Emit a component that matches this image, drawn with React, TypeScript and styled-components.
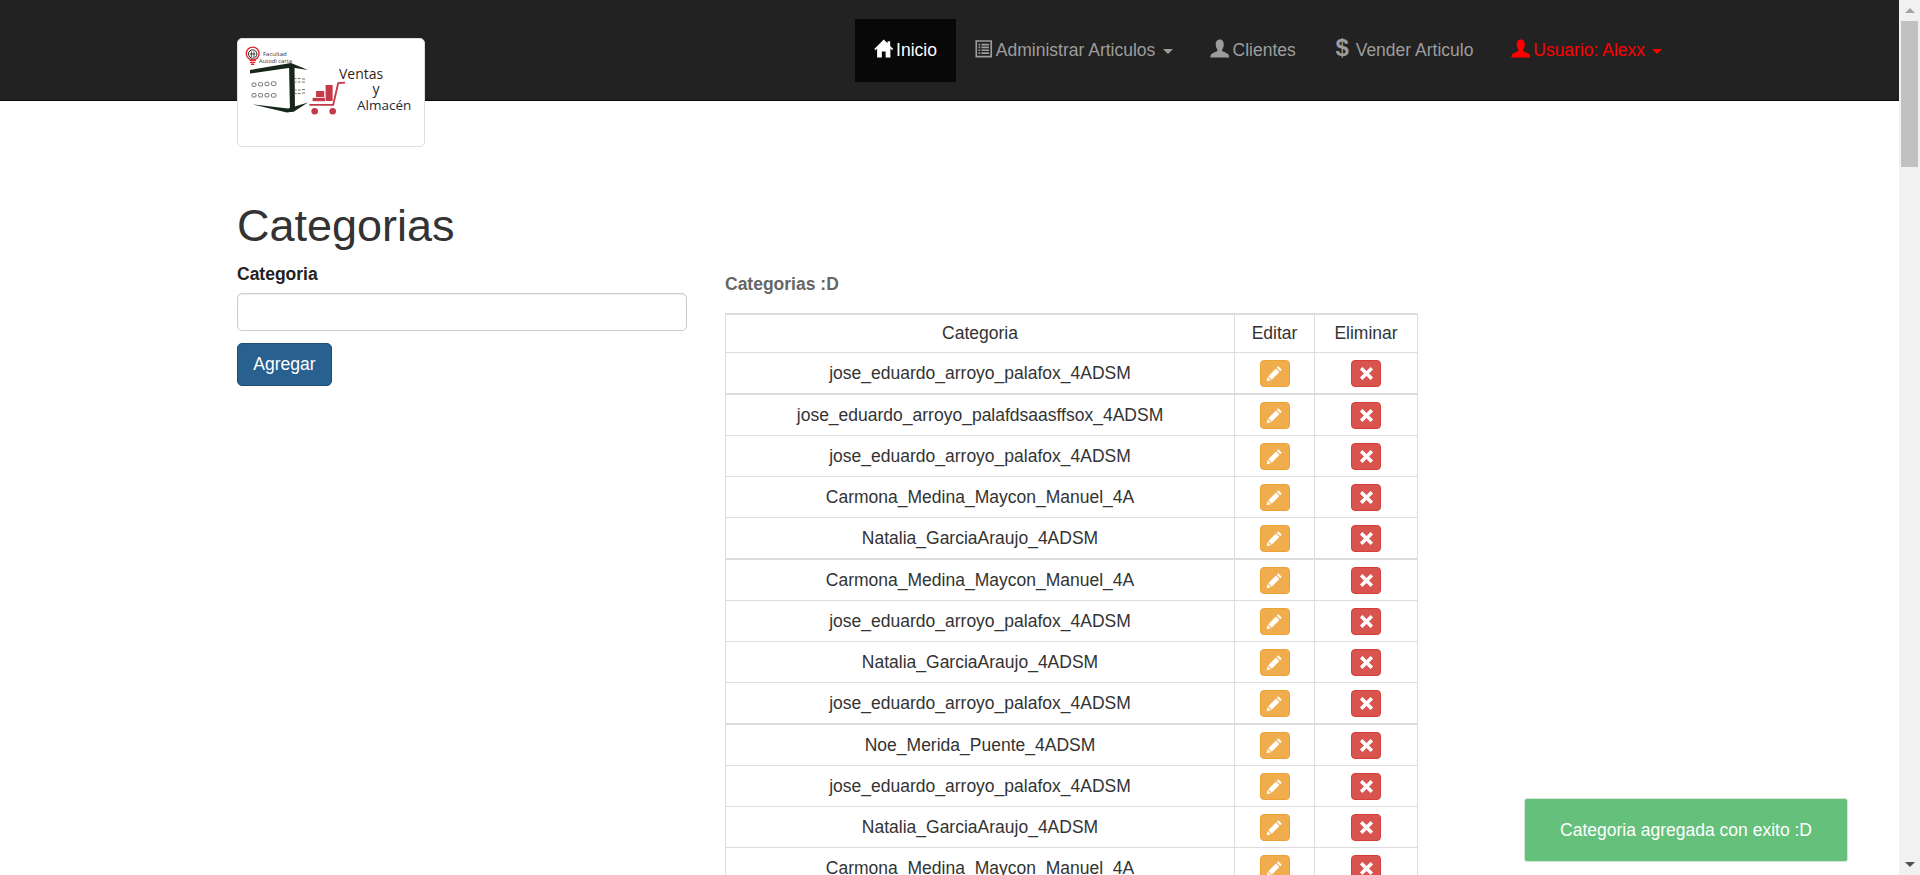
import { createGlobalStyle, styled } from 'styled-components';

const GlobalStyle = createGlobalStyle`
  body {
    margin: 0;
    padding-right: 21px;
    background: #fff;
    color: #333;
    font-family: "Liberation Sans", Arial, sans-serif;
    font-size: 17.5px;
    line-height: 25px;
  }
`;

const ScrollTrack = styled.div`
  position: fixed;
  top: 0;
  right: 0;
  bottom: 0;
  width: 21px;
  display: flex;
  flex-direction: column;
  background: #f1f1f1;
  z-index: 10;
`;

const ScrollArrow = styled.div<{ $down?: boolean }>`
  flex: none;
  height: 21px;
  display: flex;
  align-items: center;
  justify-content: center;
  margin-top: ${(p) => (p.$down ? 'auto' : '0')};

  &::before {
    content: '';
    border-left: 5px solid transparent;
    border-right: 5px solid transparent;
    border-top: ${(p) => (p.$down ? '5px solid #505050' : 'none')};
    border-bottom: ${(p) => (p.$down ? 'none' : '5px solid #a3a3a3')};
  }
`;

const ScrollThumb = styled.div`
  flex: none;
  height: 146px;
  margin: 0 2px;
  background: #c1c1c1;
`;

const Navbar = styled.nav`
  height: 100px;
  background: #222;
  border-bottom: 1px solid #080808;
`;

const Container = styled.div`
  width: 1462.5px;
  box-sizing: border-box;
  margin: 0 auto;
  padding: 0 18.75px;
`;

const NavInner = styled(Container)`
  display: flex;
  align-items: flex-start;
`;

const LogoBox = styled.div`
  flex: none;
  width: 188px;
  height: 109px;
  box-sizing: border-box;
  margin-top: 38px;
  margin-right: 430px;
  background: #fff;
  border: 1px solid #ddd;
  border-radius: 5px;
  position: relative;
  z-index: 2;

  svg {
    display: block;
    margin: -1px;
  }
`;

const NavList = styled.ul`
  display: flex;
  list-style: none;
  margin: 19px 0 0;
  padding: 0;
`;

const NavLink = styled.a<{ $active?: boolean; $danger?: boolean }>`
  display: block;
  height: 62.5px;
  box-sizing: border-box;
  padding: 18.75px;
  line-height: 25px;
  white-space: nowrap;
  color: ${(p) => (p.$active ? '#fff' : p.$danger ? '#f00' : '#9d9d9d')};
  background: ${(p) => (p.$active ? '#080808' : 'transparent')};
`;

const Glyph = styled.svg`
  display: inline-block;
  width: 19.5px;
  height: 19px;
  margin-right: -2px;
  vertical-align: -2px;
  fill: currentColor;
`;

const DollarGlyph = styled.span`
  display: inline-block;
  width: 17.5px;
  text-align: center;
  font-weight: bold;
  font-size: 24px;
  line-height: 17.5px;
`;

const Caret = styled.span`
  display: inline-block;
  margin-left: 2.5px;
  vertical-align: middle;
  border-top: 5px solid currentColor;
  border-left: 5px solid transparent;
  border-right: 5px solid transparent;
`;

const Title = styled.h1`
  margin: 0;
  padding-top: 100px;
  font-size: 45px;
  font-weight: 500;
  line-height: 49.5px;
  color: #333;
`;

const Columns = styled.div`
  display: grid;
  grid-template-columns: 450px 693px;
  column-gap: 38px;
  margin-top: 11.5px;
`;

const FormLabel = styled.label`
  display: block;
  margin-bottom: 6px;
  font-weight: bold;
  color: #222;
`;

const TextInput = styled.input`
  display: block;
  width: 100%;
  height: 38px;
  box-sizing: border-box;
  padding: 0 15px;
  background: #fff;
  border: 1px solid #ccc;
  border-radius: 5px;
  box-shadow: inset 0 1px 1px rgba(0, 0, 0, 0.075);
`;

const SubmitButton = styled.button`
  display: block;
  width: 95px;
  height: 43px;
  margin-top: 12px;
  padding: 0;
  background: #286090;
  border: 1px solid #204d74;
  border-radius: 5px;
  color: #fff;
  font: inherit;
`;

const TableTitle = styled.div`
  margin: 10px 0 16px;
  font-weight: bold;
  color: #666;
`;

const Table = styled.table`
  width: 693px;
  table-layout: fixed;
  border-collapse: separate;
  border-spacing: 0;
  border-top: 2px solid #ddd;
  border-left: 1px solid #ddd;
`;

const HeadCell = styled.th<{ $width?: number }>`
  width: ${(p) => (p.$width ? `${p.$width}px` : 'auto')};
  height: 38px;
  box-sizing: border-box;
  padding: 0;
  font-weight: normal;
  text-align: center;
  border-right: 1px solid #ddd;
  border-bottom: 1px solid #ddd;
`;

const Row = styled.tr`
  &:nth-child(4n + 1) td {
    height: 42px;
    border-bottom-width: 2px;
  }
`;

const Cell = styled.td`
  height: 41px;
  box-sizing: border-box;
  padding: 0;
  text-align: center;
  border-right: 1px solid #ddd;
  border-bottom: 1px solid #ddd;
`;

const IconButton = styled.button<{ $kind: 'edit' | 'remove' }>`
  display: inline-flex;
  align-items: center;
  justify-content: center;
  width: 30px;
  height: 27px;
  padding: 0;
  vertical-align: middle;
  color: #fff;
  background: ${(p) => (p.$kind === 'edit' ? '#f0ad4e' : '#d9534f')};
  border: 1px solid ${(p) => (p.$kind === 'edit' ? '#eea236' : '#d43f3a')};
  border-radius: 4px;

  svg {
    flex: none;
    width: 17px;
    height: 17px;
    fill: currentColor;
  }
`;

const Toast = styled.div`
  position: fixed;
  right: 72px;
  bottom: 13px;
  width: 324px;
  height: 64px;
  display: flex;
  align-items: center;
  justify-content: center;
  box-sizing: border-box;
  background: #64c07a;
  border: 1px solid #d5e5d8;
  border-radius: 3px;
  color: #fff;
  z-index: 5;
`;

const HomeIcon = () => (
  <Glyph viewBox="0 0 16 16">
    <path d="M8 0.5 L0 8.4 L1 9.4 L2.4 8.1 V15.5 H6.4 V10.6 H9.6 V15.5 H13.6 V8.1 L15 9.4 L16 8.4 L13.4 5.8 V1.8 H11.2 V3.6 Z" />
  </Glyph>
);

const ListIcon = () => (
  <Glyph viewBox="0 0 16 16">
    <path
      fillRule="evenodd"
      d="M1 1 H15 V15.5 H1 Z M2.4 2.4 V14.1 H13.6 V2.4 Z M3.6 4 H5 V5.4 H3.6 Z M6 4 H12.4 V5.4 H6 Z M3.6 6.4 H5 V7.8 H3.6 Z M6 6.4 H12.4 V7.8 H6 Z M3.6 8.8 H5 V10.2 H3.6 Z M6 8.8 H12.4 V10.2 H6 Z M3.6 11.2 H5 V12.6 H3.6 Z M6 11.2 H12.4 V12.6 H6 Z"
    />
  </Glyph>
);

const UserIcon = () => (
  <Glyph viewBox="0 0 16 16">
    <path d="M8 0.5 C5.6 0.5 4.6 2.4 4.6 4.6 C4.6 6.4 5.2 7.8 6 8.8 V10.2 C4.4 11.2 1.2 11.8 0.4 13.6 L0 15.5 H16 L15.6 13.6 C14.8 11.8 11.6 11.2 10 10.2 V8.8 C10.8 7.8 11.4 6.4 11.4 4.6 C11.4 2.4 10.4 0.5 8 0.5 Z" />
  </Glyph>
);

const PencilIcon = () => (
  <svg viewBox="0 0 16 16">
    <path d="M11.6 1.2 L14.8 4.4 L13.4 5.8 L10.2 2.6 Z" />
    <path d="M9.4 3.4 L12.6 6.6 L5.4 13.8 L2.2 10.6 Z" />
    <path d="M1.6 11.4 L4.6 14.4 L0.6 15.4 Z" />
  </svg>
);

const RemoveIcon = () => (
  <svg viewBox="0 0 16 16">
    <path d="M4.2 1.8 L8 5.6 L11.8 1.8 L14.2 4.2 L10.4 8 L14.2 11.8 L11.8 14.2 L8 10.4 L4.2 14.2 L1.8 11.8 L5.6 8 L1.8 4.2 Z" />
  </svg>
);

// logo of the store, coordinates are the pixels of the 188x109 box
const Logo = () => (
  <svg width="188" height="109" viewBox="0 0 188 109">
    <circle cx="15.7" cy="15.5" r="6.4" fill="#fff" stroke="#e0262c" strokeWidth="1.4" />
    <circle cx="15.7" cy="16" r="4.2" fill="none" stroke="#222" strokeWidth="1" />
    <path d="M14.4 13.5 V19 M17 13.5 V19 M13 16 H18.4" stroke="#222" strokeWidth="0.8" />
    <path d="M12.6 22.4 H18.8 M13 24.4 H18.4 M14 26.2 H17.4" stroke="#e0262c" strokeWidth="1.4" />
    <text x="26" y="17.5" fontFamily="Open Sans, sans-serif" fontSize="6" fill="#333">
      Facultad
    </text>
    <text x="22" y="25" fontFamily="Open Sans, sans-serif" fontSize="5.8" fill="#333">
      Autodi carta
    </text>
    <path d="M13 32 L54 25 L71 32 L55 29.5 L13 35.5 Z" fill="#16261a" />
    <path d="M52 26 L57.5 27 L58 73 L53 74 Z" fill="#16261a" />
    <path d="M16 66.5 L51 70.5 L71 64.5 L57 73.5 L50 74.5 Z" fill="#16261a" />
    <g fill="none" stroke="#666" strokeWidth="0.9">
      <rect x="15" y="45" width="4" height="3.4" rx="1" />
      <rect x="21.5" y="44.6" width="4" height="3.4" rx="1" />
      <rect x="28" y="44.2" width="4" height="3.4" rx="1" />
      <rect x="34.5" y="43.8" width="4.4" height="3.6" rx="1" />
      <rect x="15" y="55.6" width="4" height="3.4" rx="1" />
      <rect x="21.5" y="55.6" width="4" height="3.4" rx="1" />
      <rect x="28" y="55.6" width="4" height="3.4" rx="1" />
      <rect x="34.5" y="55.6" width="4.4" height="3.6" rx="1" />
      <path d="M57 40.5 h2.6 M61 40.5 h2.6 M65 41 h3 M57 44 h2.6 M61 44 h2.6 M65 44 h3" />
      <path d="M57 52 h2.6 M61 52 h2.6 M65 51.5 h3 M57 55.5 h2.6 M61 55.5 h2.6 M65 55 h3" />
    </g>
    <path d="M108 44.6 L101.2 45.2 L96.2 66.8 L72.4 66.8" fill="none" stroke="#c53a4a" strokeWidth="1.8" />
    <rect x="88.6" y="47" width="7" height="16" fill="#c53a4a" />
    <rect x="79" y="53" width="8.2" height="6" fill="#c53a4a" />
    <rect x="75.6" y="59.8" width="12.4" height="3.4" fill="#c53a4a" />
    <circle cx="77.7" cy="73.3" r="3.3" fill="#c53a4a" />
    <circle cx="95.7" cy="73.3" r="3.3" fill="#c53a4a" />
    <text x="102" y="40.5" fontFamily="Open Sans, sans-serif" fontSize="14" fill="#3a1c14">
      Ventas
    </text>
    <text x="135.5" y="56" fontFamily="Open Sans, sans-serif" fontSize="14" fill="#1c2430">
      y
    </text>
    <text x="120" y="72" fontFamily="Open Sans, sans-serif" fontSize="13.5" fill="#1c2c3c">
      Almacén
    </text>
  </svg>
);

const JOSE = 'jose_eduardo_arroyo_palafox_4ADSM';
const MAYCON = 'Carmona_Medina_Maycon_Manuel_4A';
const NATALIA = 'Natalia_GarciaAraujo_4ADSM';

const categories = [
  JOSE,
  'jose_eduardo_arroyo_palafdsaasffsox_4ADSM',
  JOSE,
  MAYCON,
  NATALIA,
  MAYCON,
  JOSE,
  NATALIA,
  JOSE,
  'Noe_Merida_Puente_4ADSM',
  JOSE,
  NATALIA,
  MAYCON,
];

const App = () => {
  return (
    <>
      <GlobalStyle />
      <Navbar>
        <NavInner>
          <LogoBox>
            <Logo />
          </LogoBox>
          <NavList>
            <li>
              <NavLink $active>
                <HomeIcon /> Inicio
              </NavLink>
            </li>
            <li>
              <NavLink>
                <ListIcon /> Administrar Articulos <Caret />
              </NavLink>
            </li>
            <li>
              <NavLink>
                <UserIcon /> Clientes
              </NavLink>
            </li>
            <li>
              <NavLink>
                <DollarGlyph>$</DollarGlyph> Vender Articulo
              </NavLink>
            </li>
            <li>
              <NavLink $danger>
                <UserIcon /> Usuario: Alexx <Caret />
              </NavLink>
            </li>
          </NavList>
        </NavInner>
      </Navbar>
      <Container>
        <Title>Categorias</Title>
        <Columns>
          <form>
            <FormLabel>Categoria</FormLabel>
            <TextInput type="text" />
            <SubmitButton type="button">Agregar</SubmitButton>
          </form>
          <div>
            <TableTitle>Categorias :D</TableTitle>
            <Table>
              <thead>
                <tr>
                  <HeadCell>Categoria</HeadCell>
                  <HeadCell $width={80}>Editar</HeadCell>
                  <HeadCell $width={103}>Eliminar</HeadCell>
                </tr>
              </thead>
              <tbody>
                {categories.map((name, i) => (
                  <Row key={i}>
                    <Cell>{name}</Cell>
                    <Cell>
                      <IconButton $kind="edit">
                        <PencilIcon />
                      </IconButton>
                    </Cell>
                    <Cell>
                      <IconButton $kind="remove">
                        <RemoveIcon />
                      </IconButton>
                    </Cell>
                  </Row>
                ))}
              </tbody>
            </Table>
          </div>
        </Columns>
      </Container>
      <Toast>Categoria agregada con exito :D</Toast>
      <ScrollTrack>
        <ScrollArrow />
        <ScrollThumb />
        <ScrollArrow $down />
      </ScrollTrack>
    </>
  );
};

export default App;
